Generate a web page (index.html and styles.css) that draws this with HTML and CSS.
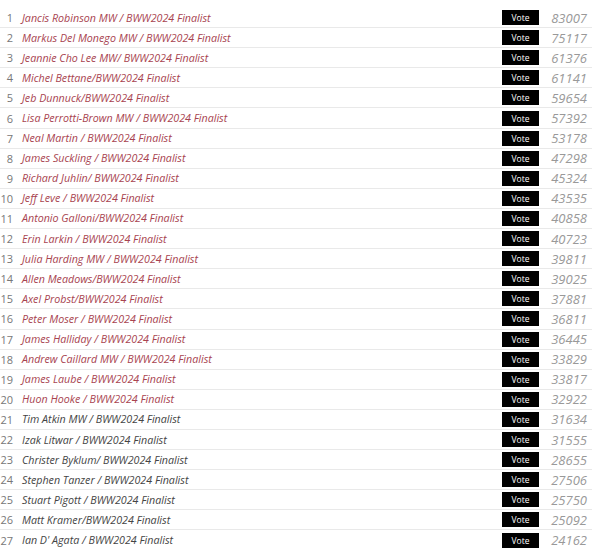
FILE: index.html
```html
<!DOCTYPE html>
<html lang="en">
<head>
    <meta charset="UTF-8">
    <meta name="viewport" content="width=device-width, initial-scale=1.0">
    <title>BWW2024 Finalists</title>
    <link rel="stylesheet" href="styles.css">
</head>
<body>
    <ol class="poll">
        <li class="row"><span class="rank">1</span><span class="name">Jancis Robinson MW / BWW2024 Finalist</span><span class="vote">Vote</span><span class="count">83007</span></li>
        <li class="row"><span class="rank">2</span><span class="name">Markus Del Monego MW / BWW2024 Finalist</span><span class="vote">Vote</span><span class="count">75117</span></li>
        <li class="row"><span class="rank">3</span><span class="name">Jeannie Cho Lee MW/ BWW2024 Finalist</span><span class="vote">Vote</span><span class="count">61376</span></li>
        <li class="row"><span class="rank">4</span><span class="name">Michel Bettane/BWW2024 Finalist</span><span class="vote">Vote</span><span class="count">61141</span></li>
        <li class="row"><span class="rank">5</span><span class="name">Jeb Dunnuck/BWW2024 Finalist</span><span class="vote">Vote</span><span class="count">59654</span></li>
        <li class="row"><span class="rank">6</span><span class="name">Lisa Perrotti-Brown MW / BWW2024 Finalist</span><span class="vote">Vote</span><span class="count">57392</span></li>
        <li class="row"><span class="rank">7</span><span class="name">Neal Martin / BWW2024 Finalist</span><span class="vote">Vote</span><span class="count">53178</span></li>
        <li class="row"><span class="rank">8</span><span class="name">James Suckling / BWW2024 Finalist</span><span class="vote">Vote</span><span class="count">47298</span></li>
        <li class="row"><span class="rank">9</span><span class="name">Richard Juhlin/ BWW2024 Finalist</span><span class="vote">Vote</span><span class="count">45324</span></li>
        <li class="row"><span class="rank">10</span><span class="name">Jeff Leve / BWW2024 Finalist</span><span class="vote">Vote</span><span class="count">43535</span></li>
        <li class="row"><span class="rank">11</span><span class="name">Antonio Galloni/BWW2024 Finalist</span><span class="vote">Vote</span><span class="count">40858</span></li>
        <li class="row"><span class="rank">12</span><span class="name">Erin Larkin / BWW2024 Finalist</span><span class="vote">Vote</span><span class="count">40723</span></li>
        <li class="row"><span class="rank">13</span><span class="name">Julia Harding MW / BWW2024 Finalist</span><span class="vote">Vote</span><span class="count">39811</span></li>
        <li class="row"><span class="rank">14</span><span class="name">Allen Meadows/BWW2024 Finalist</span><span class="vote">Vote</span><span class="count">39025</span></li>
        <li class="row"><span class="rank">15</span><span class="name">Axel Probst/BWW2024 Finalist</span><span class="vote">Vote</span><span class="count">37881</span></li>
        <li class="row"><span class="rank">16</span><span class="name">Peter Moser / BWW2024 Finalist</span><span class="vote">Vote</span><span class="count">36811</span></li>
        <li class="row"><span class="rank">17</span><span class="name">James Halliday / BWW2024 Finalist</span><span class="vote">Vote</span><span class="count">36445</span></li>
        <li class="row"><span class="rank">18</span><span class="name">Andrew Caillard MW / BWW2024 Finalist</span><span class="vote">Vote</span><span class="count">33829</span></li>
        <li class="row"><span class="rank">19</span><span class="name">James Laube / BWW2024 Finalist</span><span class="vote">Vote</span><span class="count">33817</span></li>
        <li class="row"><span class="rank">20</span><span class="name">Huon Hooke / BWW2024 Finalist</span><span class="vote">Vote</span><span class="count">32922</span></li>
        <li class="row plain"><span class="rank">21</span><span class="name">Tim Atkin MW / BWW2024 Finalist</span><span class="vote">Vote</span><span class="count">31634</span></li>
        <li class="row plain"><span class="rank">22</span><span class="name">Izak Litwar / BWW2024 Finalist</span><span class="vote">Vote</span><span class="count">31555</span></li>
        <li class="row plain"><span class="rank">23</span><span class="name">Christer Byklum/ BWW2024 Finalist</span><span class="vote">Vote</span><span class="count">28655</span></li>
        <li class="row plain"><span class="rank">24</span><span class="name">Stephen Tanzer / BWW2024 Finalist</span><span class="vote">Vote</span><span class="count">27506</span></li>
        <li class="row plain"><span class="rank">25</span><span class="name">Stuart Pigott / BWW2024 Finalist</span><span class="vote">Vote</span><span class="count">25750</span></li>
        <li class="row plain"><span class="rank">26</span><span class="name">Matt Kramer/BWW2024 Finalist</span><span class="vote">Vote</span><span class="count">25092</span></li>
        <li class="row plain"><span class="rank">27</span><span class="name">Ian D' Agata / BWW2024 Finalist</span><span class="vote">Vote</span><span class="count">24162</span></li>
    </ol>
</body>
</html>
```

FILE: styles.css
```css
* {
    margin: 0;
    padding: 0;
    box-sizing: border-box;
}

body {
    font-family: 'Open Sans', 'Liberation Sans', sans-serif;
    background-color: #fff;
    color: #555;
}

.poll {
    list-style: none;
    margin-top: 8px;
    width: 592px;
}

.row {
    display: grid;
    grid-template-columns: 17px 1fr 37px 53px;
    align-items: center;
    height: 20.1px;
    border-bottom: 1px solid #e9e9e9;
}

.row:last-child {
    border-bottom: none;
}

.rank {
    font-size: 11px;
    color: #777;
    text-align: right;
    padding-right: 4px;
}

.name {
    font-size: 10.7px;
    font-style: italic;
    color: #a8434f;
    padding-left: 5px;
    white-space: nowrap;
}

.plain .name {
    color: #444;
}

.vote {
    background-color: #000;
    color: #fff;
    font-size: 8.5px;
    text-align: center;
    height: 15px;
    line-height: 15px;
}

.count {
    font-size: 13px;
    font-style: italic;
    color: #999;
    text-align: right;
    padding-right: 5px;
}
```
